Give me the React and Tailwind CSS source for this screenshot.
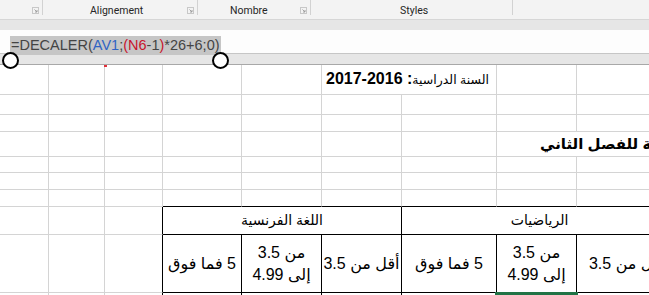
import React from "react";

const Cell = ({ r = "g", b = "g", span = 1, className = "", children, dir }) => {
  const rc = r === "k" ? "border-r-black" : "border-r-[#d4d4d4]";
  const bc = b === "k" ? "border-b-black" : "border-b-[#d4d4d4]";
  const sc = span === 3 ? "col-span-3" : span === 2 ? "col-span-2" : "";
  return (
    <div dir={dir} className={`border-r border-b ${rc} ${bc} ${sc} overflow-hidden ${className}`}>
      {children}
    </div>
  );
};

const Launcher = () => (
  <svg width="7" height="7" viewBox="0 0 7 7" className="self-end mb-[5px]">
    <rect x="0.5" y="0.5" width="6" height="6" fill="none" stroke="#c8c8c8" />
    <path d="M2.5 2.5 L5 5 M5 3 V5 H3" fill="none" stroke="#9a9a9a" strokeWidth="0.9" />
  </svg>
);

const Sep = () => <div className="w-px h-[15px] bg-[#d2d2d2]" />;

const TC = "flex items-center justify-center text-center";

export default function App() {
  return (
    <div className="relative w-[649px] h-[295px] overflow-hidden bg-white" style={{ fontFamily: '"Liberation Sans", "DejaVu Sans", sans-serif' }}>
      {/* Ribbon group labels */}
      <div className="h-[19px] bg-[#f3f3f3] flex text-[10.5px] text-[#262626]" style={{ fontFamily: 'Roboto, "Noto Sans", sans-serif' }}>
        <div className="w-[42px] flex pr-[3px] justify-end">
          <Launcher />
        </div>
        <Sep />
        <div className="w-[154px] flex items-center pt-[3px] pr-[3px]">
          <span className="ml-[47px]">Alignement</span>
          <div className="ml-auto self-stretch flex">
            <Launcher />
          </div>
        </div>
        <Sep />
        <div className="w-[112px] flex items-center pt-[3px] pr-[3px]">
          <span className="ml-[32px]">Nombre</span>
          <div className="ml-auto self-stretch flex">
            <Launcher />
          </div>
        </div>
        <Sep />
        <div className="w-[201px] flex items-center pt-[3px]">
          <span className="ml-[89px]">Styles</span>
        </div>
        <Sep />
        <div className="flex-1" />
      </div>

      {/* band */}
      <div className="h-[11px] bg-[#e6e6e6] border-t border-[#d6d6d6]" />

      {/* formula bar */}
      <div className="h-[24px] bg-[#fdfdfd] border-b border-[#c6c6c6] pt-[3px] pl-[10px]">
        <span className="inline-block h-[19px] leading-[19px] bg-[#c6c6c6] pl-[1px] pr-[1px] text-[14.5px] text-[#444444] whitespace-nowrap">
          =DECALER(<span className="text-[#2f63c4]">AV1</span>;<span className="text-[#c8142c]">(N6</span>-1<span className="text-[#c8142c]">)</span>*26+6;0)
        </span>
      </div>

      {/* column header band */}
      <div className="h-[11px] bg-[#e6e6e6] border-b border-[#a8a8a8]" />

      {/* sheet grid */}
      <div className="grid w-[678px] grid-cols-[49px_56px_58px_79px_80px_80px_95px_80px_101px] grid-rows-[30px_20px_17px_25px_16px_17px_17px_28px_58px_20px] text-black">
        {/* row 1 */}
        <Cell /><Cell /><Cell /><Cell /><Cell />
        <Cell span={2} className="flex items-start justify-end pr-[7px] pt-[2px] whitespace-nowrap">
          <div className="flex items-baseline">
            <span className="font-bold text-[16px]">2017-2016 :</span>
            <span dir="rtl" className="text-[12.5px]">السنة الدراسية</span>
          </div>
        </Cell>
        <Cell /><Cell />
        {/* row 2 */}
        <Cell /><Cell /><Cell /><Cell /><Cell /><Cell /><Cell /><Cell /><Cell />
        {/* row 3 */}
        <Cell /><Cell /><Cell /><Cell /><Cell /><Cell /><Cell /><Cell /><Cell />
        {/* row 4 */}
        <Cell /><Cell /><Cell /><Cell /><Cell /><Cell /><Cell />
        <Cell span={2} className="flex items-center pl-[43px] pt-[1px] whitespace-nowrap">
          <span dir="rtl" className="font-bold text-[15px]">نتائج الفترة الخامسة للفصل الثاني</span>
        </Cell>
        {/* row 5 */}
        <Cell /><Cell /><Cell /><Cell /><Cell /><Cell /><Cell /><Cell /><Cell />
        {/* row 6 */}
        <Cell /><Cell /><Cell /><Cell /><Cell /><Cell /><Cell /><Cell /><Cell />
        {/* row 7 */}
        <Cell /><Cell /><Cell />
        <Cell b="k" /><Cell b="k" /><Cell b="k" /><Cell b="k" /><Cell b="k" /><Cell b="k" />
        {/* row 8: table header */}
        <Cell /><Cell /><Cell r="k" />
        <Cell span={3} r="k" b="k" dir="rtl" className={`${TC} text-[14px]`}>اللغة الفرنسية</Cell>
        <Cell span={3} r="k" b="k" dir="rtl" className={`${TC} text-[14px]`}>الرياضيات</Cell>
        {/* row 9 */}
        <Cell /><Cell /><Cell r="k" />
        <Cell r="k" b="k" dir="rtl" className={`${TC} text-[16px]`}>5 فما فوق</Cell>
        <Cell r="k" b="k" dir="rtl" className={`${TC} text-[16px] leading-[22px]`}>
          <div><div>من 3.5</div><div>إلى 4.99</div></div>
        </Cell>
        <Cell r="k" b="k" dir="rtl" className={`${TC} text-[16px] whitespace-nowrap`}>أقل من 3.5</Cell>
        <Cell r="k" b="k" dir="rtl" className={`${TC} text-[16px]`}>5 فما فوق</Cell>
        <Cell r="k" b="k" dir="rtl" className={`${TC} text-[16px] leading-[22px]`}>
          <div><div>من 3.5</div><div>إلى 4.99</div></div>
        </Cell>
        <Cell r="k" b="k" dir="rtl" className={`${TC} text-[16px] whitespace-nowrap`}>أقل من 3.5</Cell>
        {/* row 10 */}
        <Cell /><Cell /><Cell r="k" />
        <Cell r="k" /><Cell r="k" /><Cell r="k" /><Cell r="k" />
        <Cell r="k" className="relative overflow-visible">
          <div className="text-center text-[16px] leading-[18px] mt-[-2px]">#VALEUR!</div>
          <div className="absolute left-[-2px] right-[-2px] top-[-1px] h-[3px] bg-[#217346]" />
        </Cell>
        <Cell r="k" />
      </div>

      {/* small red marker */}
      <div className="absolute left-[104px] top-[65px] w-[3px] h-[2px] bg-[#e0303a]" />

      {/* selection handles */}
      <div className="absolute left-[2px] top-[52px] w-[17px] h-[17px] rounded-full border-[2.5px] border-black bg-white" />
      <div className="absolute left-[212px] top-[52px] w-[17px] h-[17px] rounded-full border-[2.5px] border-black bg-white" />
    </div>
  );
}
